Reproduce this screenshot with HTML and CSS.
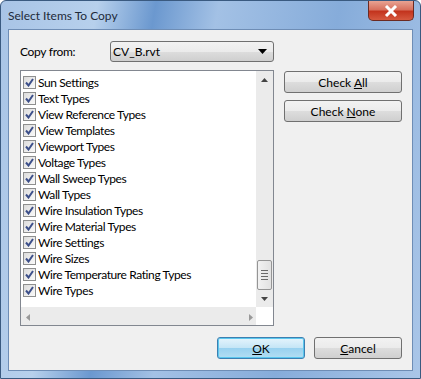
FILE: index.html
```html
<!DOCTYPE html>
<html lang="en">
<head>
  <meta charset="UTF-8" />
  <title>Select Items To Copy</title>
  <link rel="stylesheet" href="styles.css">
</head>
<body>
  <div class="window">
    <div class="titlebar">
      <span class="title">Select Items To Copy</span>
      <div class="close">
        <svg width="14" height="12" viewBox="0 0 14 12"><path d="M2 1 L12 11 M12 1 L2 11" stroke="#fff" stroke-width="3"/></svg>
      </div>
    </div>
    <div class="client">
      <div class="source-row">
        <span class="label">Copy from:</span>
        <div class="combo">
          <span>CV_B.rvt</span>
          <svg width="9" height="5" viewBox="0 0 9 5"><path d="M0 0 H9 L4.5 5 Z" fill="#000"/></svg>
        </div>
      </div>
      <div class="main-row">
        <div class="listbox">
          <div class="list-inner">
            <ul class="items" id="items"></ul>
            <div class="vscroll">
              <div class="arrow up"><svg width="7" height="4" viewBox="0 0 7 4"><path d="M0 4 H7 L3.5 0 Z" fill="#444"/></svg></div>
              <div class="track"></div>
              <div class="thumb"><i></i><i></i><i></i><i></i></div>
              <div class="arrow down"><svg width="7" height="4" viewBox="0 0 7 4"><path d="M0 0 H7 L3.5 4 Z" fill="#444"/></svg></div>
            </div>
          </div>
          <div class="hscroll">
            <div class="arrow"><svg width="4" height="7" viewBox="0 0 4 7"><path d="M4 0 V7 L0 3.5 Z" fill="#999"/></svg></div>
            <div class="arrow"><svg width="4" height="7" viewBox="0 0 4 7"><path d="M0 0 V7 L4 3.5 Z" fill="#999"/></svg></div>
          </div>
        </div>
        <div class="side-buttons">
          <button class="btn">Check <u>A</u>ll</button>
          <button class="btn">Check <u>N</u>one</button>
        </div>
      </div>
      <div class="bottom-row">
        <button class="btn ok"><u>O</u>K</button>
        <button class="btn"><u>C</u>ancel</button>
      </div>
    </div>
  </div>
  <script>
    var names = ["Sun Settings", "Text Types", "View Reference Types", "View Templates",
      "Viewport Types", "Voltage Types", "Wall Sweep Types", "Wall Types",
      "Wire Insulation Types", "Wire Material Types", "Wire Settings", "Wire Sizes",
      "Wire Temperature Rating Types", "Wire Types"];
    var ul = document.getElementById('items');
    names.forEach(function(n) {
      var li = document.createElement('li');
      li.innerHTML = '<span class="check"><svg width="9" height="9" viewBox="0 0 9 9"><path d="M1 4.5 L3.5 7.5 L8 1" fill="none" stroke="#3c4f8a" stroke-width="2"/></svg></span>' + n;
      ul.appendChild(li);
    });
  </script>
</body>
</html>
```

FILE: styles.css
```css
body { margin: 0; font-family: Lato, "Open Sans", sans-serif; font-size: 12px; color: #000; background: #fff; }
.window {
  width: 421px;
  height: 379px;
  box-sizing: border-box;
  border: 1px solid #3a5a80;
  border-radius: 6px 6px 0 0;
  background: linear-gradient(100deg, #a8c4e6 0%, #b7d0ec 20%, #6b98cf 32%, #a3c1e5 45%, #86acda 70%, #aac6e8 100%);
  display: flex;
  flex-direction: column;
}
.titlebar { height: 28px; display: flex; justify-content: space-between; align-items: flex-start; }
.title { padding: 7px 0 0 7px; font-size: 12px; color: #1e2a3a; }
.close {
  width: 44px;
  height: 19px;
  margin-right: 6px;
  border: 1px solid #6b2a22;
  border-top: none;
  border-radius: 0 0 5px 5px;
  background: linear-gradient(#e8a393 0%, #d8715e 45%, #c3341e 55%, #d6593f 100%);
  display: flex;
  align-items: center;
  justify-content: center;
}
.client {
  flex: 1;
  margin: 0 7px 7px 7px;
  border: 1px solid #6e8db5;
  background: #f0f0f0;
  padding: 10px 10px 0 11px;
}
.source-row { display: grid; grid-template-columns: 90px 164px; align-items: center; height: 22px; }
.label { letter-spacing: -0.3px; }
.combo {
  box-sizing: border-box;
  height: 21px;
  border: 1px solid #707070;
  border-radius: 3px;
  background: linear-gradient(#f2f2f2 0%, #ebebeb 50%, #dddddd 51%, #cfcfcf 100%);
  display: flex;
  align-items: center;
  justify-content: space-between;
  padding: 0 6px 0 2px;
}
.main-row { display: flex; margin-top: 8px; }
.listbox {
  width: 252px;
  height: 254px;
  border: 1px solid #828790;
  background: #fff;
  display: flex;
  flex-direction: column;
}
.list-inner { flex: 1; display: flex; }
.items { list-style: none; margin: 0; padding: 3px 0 0 2px; flex: 1; letter-spacing: -0.4px; }
.items li { height: 16px; display: flex; align-items: center; white-space: nowrap; }
.check {
  width: 11px;
  height: 11px;
  border: 1px solid #8e8f8f;
  background: linear-gradient(135deg, #dcdcdc, #fafafa);
  margin-right: 2px;
  display: flex;
  align-items: center;
  justify-content: center;
}
.vscroll { width: 17px; background: #ebebeb; display: flex; flex-direction: column; }
.vscroll .arrow { height: 17px; display: flex; align-items: center; justify-content: center; }
.vscroll .track { flex: 1; }
.thumb {
  height: 30px;
  margin: 0 1px;
  box-sizing: border-box;
  border: 1px solid #959595;
  border-radius: 2px;
  background: linear-gradient(90deg, #f2f2f2, #e2e2e2);
  display: flex;
  flex-direction: column;
  align-items: center;
  justify-content: center;
  gap: 2px;
}
.thumb i { display: block; width: 7px; height: 1px; background: #6a6a6a; }
.hscroll { height: 18px; background: #ebebeb; margin-right: 17px; display: flex; justify-content: space-between; align-items: center; padding: 0 3px 0 5px; }
.side-buttons { display: flex; flex-direction: column; gap: 7px; margin-left: 10px; margin-top: 1px; }
.btn {
  width: 118px;
  height: 22px;
  border: 1px solid #707070;
  border-radius: 3px;
  background: linear-gradient(#f2f2f2 0%, #ebebeb 50%, #dddddd 51%, #cfcfcf 100%);
  font-family: Lato, "Open Sans", sans-serif;
  font-size: 12px;
  color: #000;
  padding: 0;
}
.bottom-row { display: flex; justify-content: flex-end; gap: 9px; margin-top: 11px; }
.bottom-row .btn { width: 88px; }
.btn.ok {
  border-color: #3c7fb1;
  background: linear-gradient(#e5f4fc 0%, #c4e5f6 50%, #98d1ef 51%, #b3def3 100%);
  box-shadow: inset 0 0 0 1px #5bc7ee;
}
```
